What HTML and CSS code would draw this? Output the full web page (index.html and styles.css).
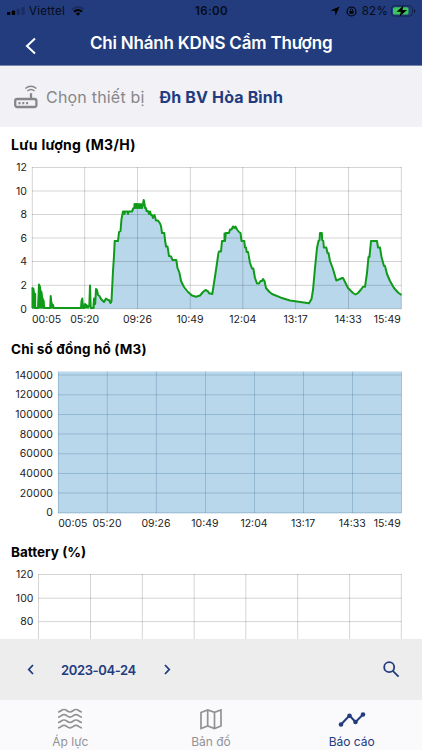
FILE: index.html
```html
<!DOCTYPE html>
<html lang="vi">
  <head>
    <meta charset="UTF-8" />
    <meta name="viewport" content="width=device-width, initial-scale=1.0" />
    <title>Báo cáo</title>
    <link rel="stylesheet" href="styles.css">
  </head>
  <body>
    <div class="screen">
      <header class="header">
        <div class="status-bar">
          <div class="status-left">
            <svg width="18" height="8" viewBox="0 0 18 8">
              <rect x="0" y="5" width="3.3" height="3" rx="0.8" />
              <rect x="4.8" y="3.5" width="3.3" height="4.5" rx="0.8" />
              <rect x="9.6" y="1.8" width="3.3" height="6.2" rx="0.8" opacity="0.22" />
              <rect x="14.4" y="0" width="3.3" height="8" rx="0.8" opacity="0.22" />
            </svg>
            <span class="carrier">Viettel</span>
            <svg class="wifi" width="14" height="10" viewBox="0 0 14 10">
              <path d="M1 3.6Q7-1.6 13 3.6" fill="none" stroke="#000" stroke-width="1.8" opacity="0.25" />
              <path d="M3 5.8Q7 2.2 11 5.8" fill="none" stroke="#000" stroke-width="2" />
              <path d="M4.8 7.4Q7 5.6 9.2 7.4L7 9.8z" />
            </svg>
          </div>
          <span class="clock">16:00</span>
          <div class="status-right">
            <svg width="10" height="10" viewBox="0 0 10 10">
              <path d="M9.6.4 5.6 9.6 4.9 5.1.4 4.4z" />
            </svg>
            <svg class="lock" width="11" height="11" viewBox="0 0 11 11">
              <circle cx="5.5" cy="5.5" r="4.5" fill="none" stroke="#000" stroke-width="1.1" />
              <rect x="3.5" y="5" width="4" height="2.8" rx="0.4" />
              <path d="M4.3 5V4a1.2 1.2 0 0 1 2.4 0v1" fill="none" stroke="#000" stroke-width="0.8" />
            </svg>
            <span class="percent">82%</span>
            <svg class="battery" width="25" height="12" viewBox="0 0 25 12">
              <rect x="0.5" y="0.7" width="21" height="10.4" rx="3" fill="none" stroke="#101d40" opacity="0.7" />
              <rect x="2" y="2.2" width="15.5" height="7.4" rx="1.6" fill="#3bc65c" />
              <path d="M23 4v4q1.3-.6 1.3-2T23 4z" opacity="0.6" />
              <path d="M12.5.4 5.6 6.8h4.2L8.7 11.6l7.3-6.5h-4.5z" />
            </svg>
          </div>
        </div>
        <div class="title-bar">
          <svg class="back" width="12" height="18" viewBox="0 0 12 18">
            <path d="M10 1.5 2 9l8 7.5" />
          </svg>
          <h1 class="title">Chi Nhánh KDNS Cẩm Thượng</h1>
        </div>
      </header>

      <div class="device">
        <svg class="router" width="24" height="24" viewBox="0 0 24 24">
          <rect x="1.2" y="14" width="21.2" height="8" rx="2" />
          <path d="M17 14V8.3M4.5 18.2h2M8.3 18.2h2M12.1 18.2h2" />
          <path class="thin" d="M11.4 3.5Q17-1 22.4 3.5M13.3 6Q17 3.2 20.5 6" />
        </svg>
        <span class="device-label">Chọn thiết bị</span>
        <span class="device-name">Đh BV Hòa Bình</span>
      </div>

      <main class="charts">
        <section class="chart">
          <h2 class="chart-title flow-title">Lưu lượng (M3/H)</h2>
          <svg class="plot" width="422" height="183.5" viewBox="0 155 422 183.5">
            <path class="area" d="M32.5 308.7V288L34 292 36 308.7H38L39 285 41.5 291 44 308.7H93.5L94 298 95 303 96 289 98 295 101 299 104 302 106 298.5 110 301 111 302 113 270 115 241H118L119 232 120.5 231 122 216 123 211H132L134 205H142L144 204 147 211 156 220 160 223 162 233H164L166 246 169 256 173 260H176L178 271 182 283 186 290 191 295 196 297 200 295.5 205 290 208 292 212 294 214 283 218 258 221 251 222 241H225V233H229L231 229 233 227H236L240 233 242 241H244L246 252 250 265 253 270 257 284H259L263 279 265 283 266 288 272 294 282 298 294 301 309 303.5 312 297 314 280 317 250 320 233H321.5L323 247H326L329 258 333 269 336 280 342 278 348 289 355 294.5 360 291 365 287 368 258 371 241H377L378 247H380L384 266 390 281 396 290 401.5 295V308.7z" />
            <path class="grid" d="M32 167.5H401.5M32 191H401.5M32 214.5H401.5M32 238H401.5M32 261.5H401.5M32 285.3H401.5M32 308.7H401.5M32.3 167V309M84.7 167V309M137.5 167V309M190.3 167V309M242.8 167V309M295.6 167V309M348.5 167V309M401.3 167V309" />
            <path class="solid" d="M32 308.5V288L35.2 294V308.5zM38 308.5 38.7 285H40L42 293 44.3 301V308.5zM50 308.5V297L53.7 306V308.5zM81 308.5V300L83 299V308.5zM84 308.5 85 304 89 306V308.5zM93.3 308.5V299H94.5V308.5zM134.2 204H142.5V208.5H134.2z" />
            <path class="line" d="M32.5 308V288L33.5 289 34 293 35.2 294V308H38L39 284.5 40 287 40.5 293 41.5 292 42 300 43.5 300.5 44.3 308H50.2L50.7 296 51.5 304.5 53 305 53.7 308H81L81.5 301 82.3 298.5 83 308H84L85 304 88 306.5 89.3 306 90 285.5 90.7 308H93.3L94 298.5 95.2 304 96 289 97 290 98 295 99.5 296 101 299 104 302 106 298.5 108 300 109 300 110.5 303 111.5 301 113 271 114 256 114.7 241H118L119 232 120.5 231 121.5 219 123 211.5H124L124.5 214 125 211.5H127.5L128 214 128.7 211.5H132L133.5 208H134.5V204V208L136 204V208L137 204 138 208 139 204 140 208 141 204 142 208 143 204 143.7 200 144.5 204 145 208H146L146.5 211H148L149 214 150 211.5 151 215H152L153 218 154.5 215 156 220.5H158L160 223.5 161 226 162 233H164.3L165 240 166 246.5H167.5L169 256 171 256.5 172.5 260H176.3L177.5 268 179.5 273 181 281 184 287 188 292 192 295.5 196 296.7 200 295.5 203 292 205.5 290 208 291.3 209 293.3 212.3 294 214 283 216 270 218.3 254 219 251.5H221L222 241H224.5V233.5H225V241L225.8 233H229L230 229.5H231.5L233 226.5 234.5 228 235.5 226.5 237 229.5 239 232 240.5 233 241.5 241H244.3L245 247.5H246L246.7 252H248L250 263 252 268.5H253.3L255 278 257 283.5H259L260.5 281H262L263 279 264.5 281 266 288 269 291.5 272 294 281 297.7 290 300.5 309 303.3 311.5 299 313 290 315 268 317 248 318.5 241 319.5 240 320 233H321.8L322.2 240 323.3 241 323.8 247.5H326.3L327.5 253H328.5L330 261 333 269 336.3 280.5 340 279 342 278H343L345 282 348 288 353 293 355.5 294.5 358 293 361 289.5 363 286.8H365L367 273 368.5 257H369.5L371 241H377L378 247.5H380L381.5 257 384 266H385L387 274 390 281 394 288 398 292.5 401.5 295" />
            <g class="y-label">
              <text x="27" y="171">12</text>
              <text x="27" y="194.5">10</text>
              <text x="27" y="218">8</text>
              <text x="27" y="241.7">6</text>
              <text x="27" y="265.3">4</text>
              <text x="27" y="289">2</text>
              <text x="27" y="312.5">0</text>
            </g>
            <g class="x-label">
              <text x="46.6" y="323">00:05</text>
              <text x="84.7" y="323">05:20</text>
              <text x="137.5" y="323">09:26</text>
              <text x="190" y="323">10:49</text>
              <text x="242.8" y="323">12:04</text>
              <text x="295.6" y="323">13:17</text>
              <text x="348.3" y="323">14:33</text>
              <text x="387.2" y="323">15:49</text>
            </g>
          </svg>
        </section>

        <section class="chart">
          <h2 class="chart-title meter-title">Chỉ số đồng hồ (M3)</h2>
          <svg class="plot" width="422" height="183.5" viewBox="0 358.5 422 183.5">
            <path class="area" d="M58 371H401.7V512.7H58z" />
            <path class="grid grid-filled" d="M58 374.5H401.5M58 394.3H401.5M58 414H401.5M58 433.5H401.5M58 453.3H401.5M58 473H401.5M58 492.5H401.5M58 512.3H401.5M58.3 371V512.5M107.3 371V512.5M156.4 371V512.5M205.5 371V512.5M254.5 371V512.5M303.5 371V512.5M352.5 371V512.5M401.5 371V512.5" />
            <g class="y-label">
              <text x="53" y="378">140000</text>
              <text x="53" y="397.7">120000</text>
              <text x="53" y="417.4">100000</text>
              <text x="53" y="437">80000</text>
              <text x="53" y="456.7">60000</text>
              <text x="53" y="476.3">40000</text>
              <text x="53" y="496">20000</text>
              <text x="53" y="515.7">0</text>
            </g>
            <g class="x-label">
              <text x="72.8" y="526.6">00:05</text>
              <text x="107" y="526.6">05:20</text>
              <text x="156" y="526.6">09:26</text>
              <text x="204.9" y="526.6">10:49</text>
              <text x="254" y="526.6">12:04</text>
              <text x="303.1" y="526.6">13:17</text>
              <text x="352.2" y="526.6">14:33</text>
              <text x="387.2" y="526.6">15:49</text>
            </g>
          </svg>
        </section>

        <section class="chart">
          <h2 class="chart-title battery-title">Battery (%)</h2>
          <svg class="plot" width="422" height="183.5" viewBox="0 562 422 183.5">
            <path class="grid" d="M38.5 574.5H401.5M38.5 598.2H401.5M38.5 621.6H401.5M38.5 574V716M90.5 574V716M142.3 574V716M194.2 574V716M245.8 574V716M297.7 574V716M349.6 574V716M401.3 574V716" />
            <g class="y-label">
              <text x="33.5" y="578">120</text>
              <text x="33.5" y="601.5">100</text>
              <text x="33.5" y="625.3">80</text>
            </g>
          </svg>
        </section>
      </main>

      <div class="date-bar">
        <svg class="arrow" width="8" height="11" viewBox="0 0 8 11">
          <path d="M6 1 1.8 5.5 6 10" />
        </svg>
        <span class="date">2023-04-24</span>
        <svg class="arrow" width="8" height="11" viewBox="0 0 8 11">
          <path d="M2 1 6.2 5.5 2 10" />
        </svg>
        <svg class="search" width="17" height="17" viewBox="0 0 17 17">
          <circle cx="6.2" cy="6.2" r="5" />
          <path d="m9.8 9.8 5.8 5.8" />
        </svg>
      </div>

      <nav class="tabs">
        <a class="tab">
          <svg class="waves" width="26" height="24" viewBox="0 0 26 24">
            <path d="M1 4C4 4 4 1.5 7 1.5S10 4 13 4 16 1.5 19 1.5 22 4 25 4" />
            <path d="M1 9.2C4 9.2 4 6.7 7 6.7S10 9.2 13 9.2 16 6.7 19 6.7 22 9.2 25 9.2" />
            <path d="M1 14.5C4 14.5 4 12 7 12S10 14.5 13 14.5 16 12 19 12 22 14.5 25 14.5" />
            <path d="M1 19.8C4 19.8 4 17.3 7 17.3S10 19.8 13 19.8 16 17.3 19 17.3 22 19.8 25 19.8" />
          </svg>
          <span>Áp lực</span>
        </a>
        <a class="tab">
          <svg width="26" height="24" viewBox="0 0 26 24">
            <path d="M3 4.5 9.7 2l6.8 2.3L23 2v16l-6.5 2.5L9.7 18 3 20.5zM9.7 2v16M16.5 4.3v16" />
          </svg>
          <span>Bản đồ</span>
        </a>
        <a class="tab active">
          <svg width="28" height="24" viewBox="0 0 28 24">
            <path d="m3 16.5 8.5-9 6 6.5L25 6.5" />
            <circle cx="3" cy="16.5" r="2.3" />
            <circle cx="11.5" cy="7.8" r="2.3" />
            <circle cx="17.5" cy="14" r="2.3" />
            <circle cx="25" cy="6.5" r="2.3" />
          </svg>
          <span>Báo cáo</span>
        </a>
      </nav>
    </div>
  </body>
</html>
```
FILE: styles.css
```css
:root {
  --primary: #223c7e;
  --gray: #87878a;
  --line: #0f9b19;
  --fill: #b8d7eb;
}

* {
  box-sizing: border-box;
}

body {
  margin: 0;
  font-family: Inter, "Liberation Sans", sans-serif;
  background: #fff;
}

svg {
  display: block;
  flex-shrink: 0;
}

.screen {
  display: flex;
  flex-direction: column;
  width: 422px;
  height: 750px;
  overflow: hidden;
}

/* header */
.header {
  height: 66px;
  background: var(--primary);
  border-bottom: 1px solid #7886ae;
}

.status-bar {
  display: grid;
  grid-template-columns: 1fr auto 1fr;
  align-items: center;
  height: 22px;
  padding: 0 6px 0 7px;
  font-size: 11px;
  color: #060b18;
}

.status-left,
.status-right {
  display: flex;
  align-items: center;
}

.status-right {
  justify-content: flex-end;
}

.carrier {
  margin-left: 4px;
  font-size: 11.5px;
  letter-spacing: 0.3px;
}

.wifi {
  margin-left: 6px;
}

.clock {
  font-weight: 600;
  font-size: 11.5px;
  letter-spacing: 0.4px;
}

.lock {
  margin-left: 6px;
}

.percent {
  margin-left: 5px;
  font-size: 11.5px;
  letter-spacing: 0.3px;
}

.battery {
  margin-left: 3px;
}

.title-bar {
  display: flex;
  align-items: center;
  height: 43px;
  padding-left: 25px;
}

.back {
  margin-top: 4px;
  fill: none;
  stroke: #fff;
  stroke-width: 2;
}

.title {
  margin: 0 0 0 53px;
  font-size: 17px;
  font-weight: 600;
  line-height: 43px;
  letter-spacing: -0.2px;
  color: #fff;
  white-space: nowrap;
}

/* device picker */
.device {
  display: flex;
  align-items: center;
  height: 61px;
  padding-left: 14px;
  background: #f1f1f6;
  font-size: 16px;
  white-space: nowrap;
}

.router {
  fill: none;
  stroke: var(--gray);
  stroke-width: 2.3;
}

.router .thin {
  stroke-width: 1.5;
}

.device-label {
  margin-left: 8px;
  letter-spacing: 0.2px;
  color: var(--gray);
}

.device-name {
  margin-left: 15px;
  font-weight: 700;
  letter-spacing: 0.14px;
  color: var(--primary);
}

/* charts */
.charts {
  flex: 1;
  min-height: 0;
  padding-top: 8px;
  overflow: hidden;
}

.chart {
  height: 203.5px;
}

.chart-title {
  height: 20px;
  margin: 0;
  padding-left: 11px;
  font-size: 13.5px;
  font-weight: 700;
  line-height: 20px;
  color: #000;
}

.flow-title {
  font-size: 14px;
  letter-spacing: 0.3px;
}

.meter-title {
  letter-spacing: 0.15px;
}

.grid {
  fill: none;
  stroke: #000;
  stroke-opacity: 0.17;
}

.grid-filled {
  stroke: #1c4f78;
  stroke-opacity: 0.22;
}

.area {
  fill: var(--fill);
}

.line {
  fill: none;
  stroke: var(--line);
  stroke-width: 2;
  stroke-linejoin: round;
}

.solid {
  fill: var(--line);
}

.plot text {
  font-size: 10.5px;
  fill: #222;
}

.y-label {
  text-anchor: end;
  letter-spacing: 0.05px;
}

.x-label {
  text-anchor: middle;
}

/* date bar */
.date-bar {
  display: flex;
  align-items: center;
  height: 61px;
  padding: 0 22px 0 27px;
  background: #ededed;
  color: var(--primary);
}

.arrow,
.search {
  fill: none;
  stroke: currentColor;
  stroke-width: 1.8;
}

.date {
  width: 76px;
  margin: 0 26px;
  font-size: 13px;
  font-weight: 600;
  letter-spacing: -0.38px;
  white-space: nowrap;
}

.search {
  margin-left: auto;
}

/* tabs */
.tabs {
  display: grid;
  grid-template-columns: repeat(3, 1fr);
  height: 50px;
  background: #fafafd;
}

.tab {
  display: flex;
  flex-direction: column;
  align-items: center;
  padding-top: 8px;
  font-size: 12px;
  line-height: 19px;
  color: #929295;
}

.tab svg {
  fill: none;
  stroke: currentColor;
  stroke-width: 1.7;
}

.tab circle {
  fill: currentColor;
  stroke: none;
}

.tab.active {
  color: var(--primary);
}

.tab.active svg {
  stroke-width: 2;
}
```
